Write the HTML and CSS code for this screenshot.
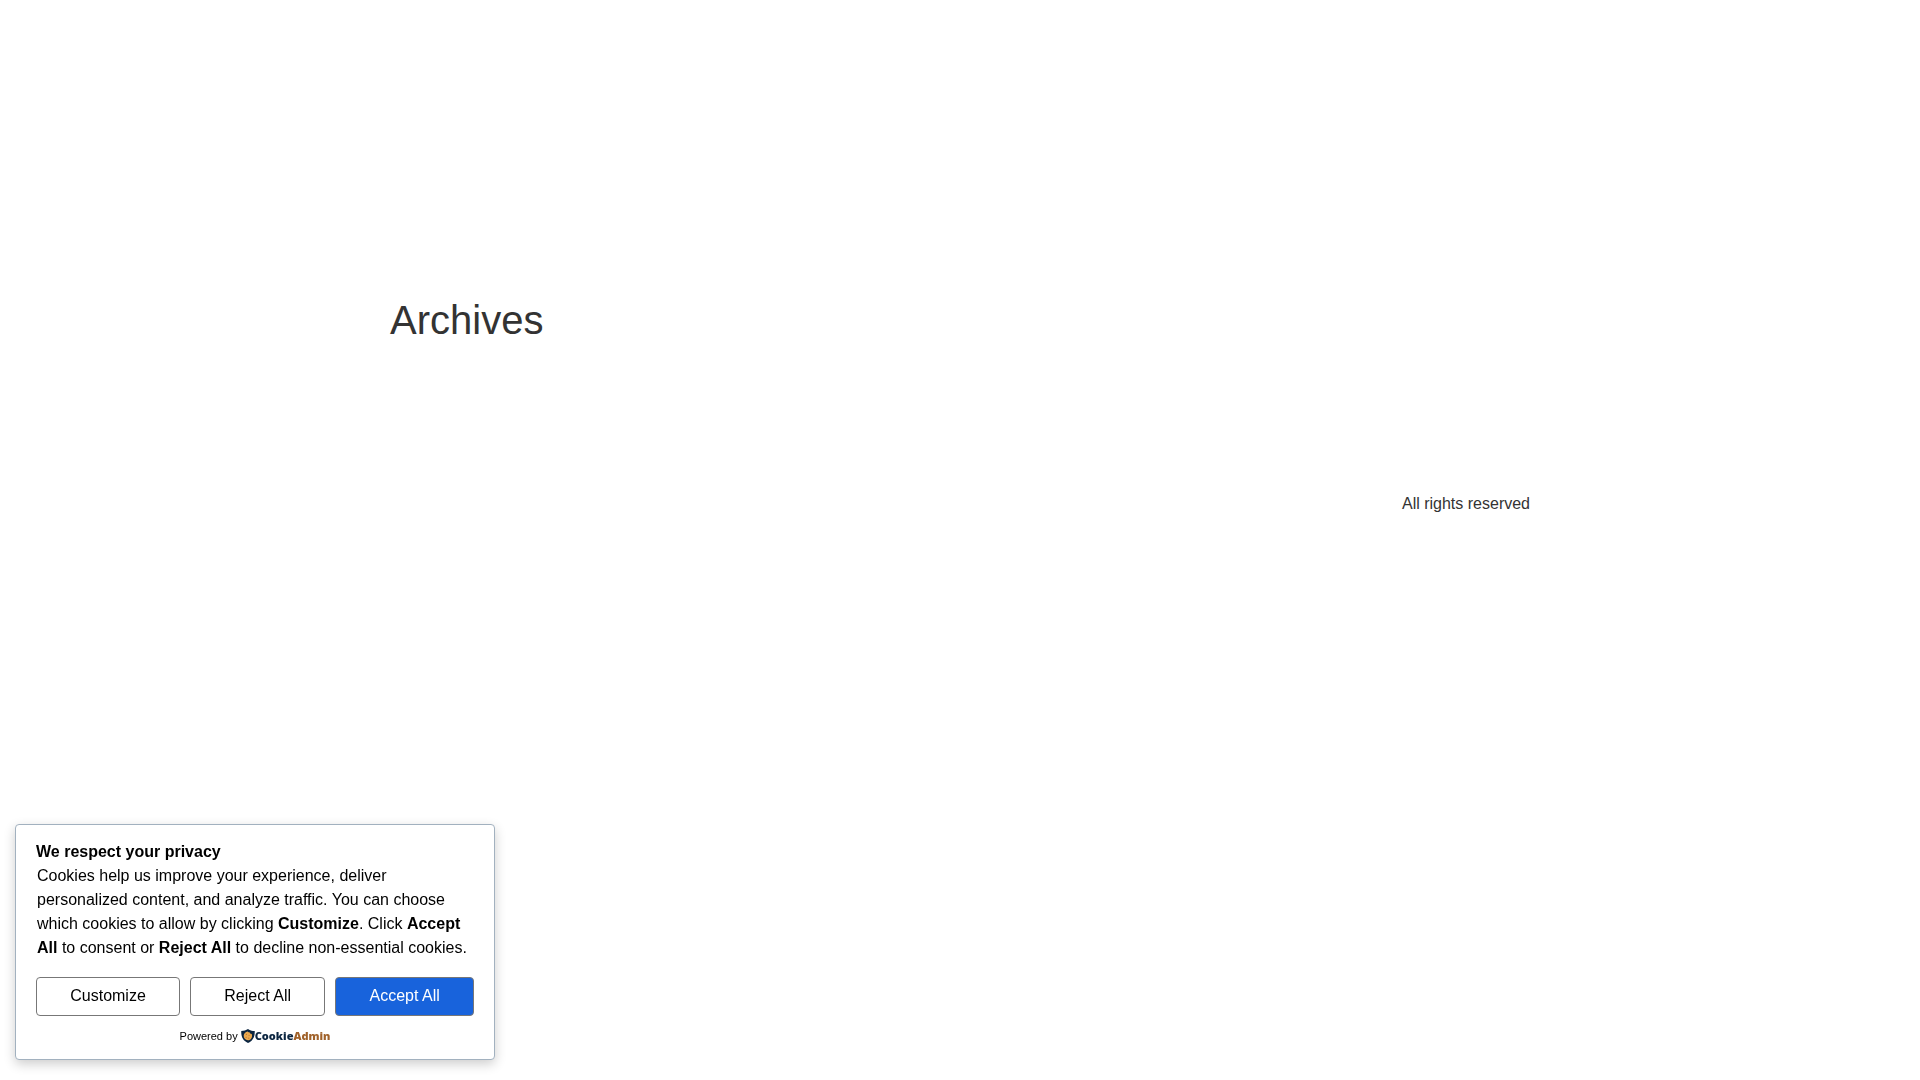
FILE: index.html
```html
<!DOCTYPE html>
<html lang="en">
<head>
    <meta charset="UTF-8">
    <meta name="viewport" content="width=device-width, initial-scale=1">
    <title>Archives</title>
    <link rel="stylesheet" href="styles.css">
</head>
<body>
    <main class="site-main">
        <h1 class="page-title">Archives</h1>
    </main>
    <footer class="site-footer">
        <p class="copyright">All rights reserved</p>
    </footer>

    <section class="cookie-box" aria-labelledby="cookie-title">
        <h2 class="cookie-title" id="cookie-title">We respect your privacy</h2>
        <p class="cookie-text">Cookies help us improve your experience, deliver personalized content, and analyze traffic. You can choose which cookies to allow by clicking <strong>Customize</strong>. Click <strong>Accept All</strong> to consent or <strong>Reject All</strong> to decline non-essential cookies.</p>
        <div class="cookie-buttons">
            <button type="button" class="cookie-btn">Customize</button>
            <button type="button" class="cookie-btn">Reject All</button>
            <button type="button" class="cookie-btn cookie-btn-accept">Accept All</button>
        </div>
        <div class="powered-by">
            <span>Powered by</span>
            <a href="#" class="brand">
                <svg class="brand-icon" viewBox="0 0 26 26" aria-hidden="true">
                    <path fill="#0b2540" d="M13 0c3.500 2.500 7.500 3.600 12.500 3.800C26 14 22.500 22 13 26 3.500 22 0 14 .5 3.800 5.500 3.600 9.500 2.500 13 0z"/>
                    <path fill="#eba94f" d="M12.500 4.500c1 1.500 2 1.500 3.500 1.500.3 2 1.500 3 4 3.200 2 5.800-1.500 11.800-7.200 11.800C8 21 5 17 5 12.700 5 8.300 8.200 5 12.500 4.500z"/>
                    <g fill="#b8752c">
                        <circle cx="10" cy="10" r="1"/>
                        <circle cx="15" cy="12" r="1"/>
                        <circle cx="9.500" cy="15.500" r="1"/>
                        <circle cx="14.500" cy="17" r="1"/>
                    </g>
                </svg>
                <span class="brand-name">Cookie<span class="brand-accent">Admin</span></span>
            </a>
        </div>
    </section>
</body>
</html>
```
FILE: styles.css
```css
* {
    box-sizing: border-box;
}
body {
    margin: 0;
    font-family: "Liberation Sans", Arial, sans-serif;
    font-size: 16px;
    line-height: 24px;
    color: #333;
    background-color: #fff;
}
.site-main,
.site-footer {
    max-width: 1140px;
    margin: 0 auto;
}
.site-main {
    padding: 296px 0 144px;
}
.page-title {
    margin: 0;
    font-size: 40px;
    font-weight: 400;
    line-height: 48px;
}
.site-footer {
    padding: 4px 0;
    text-align: right;
}
.copyright {
    margin: 0;
}
.cookie-box {
    position: fixed;
    left: 15px;
    bottom: 20px;
    width: 100%;
    max-width: 480px;
    padding: 15px 20px;
    color: #000;
    background-color: #fff;
    border: 1px solid #a2b1bf;
    border-radius: 4px;
    box-shadow: 0 4px 12px rgba(0,0,0,0.2);
}
.cookie-title {
    margin: 0;
    font-size: 16px;
    font-weight: 700;
}
.cookie-text {
    margin: 0;
    padding: 0 1px;
}
.cookie-buttons {
    display: flex;
    gap: 10px;
    margin-top: 17px;
}
.cookie-btn {
    flex: 1 1 auto;
    height: 39px;
    padding: 0 20px 2px;
    font-family: inherit;
    font-size: 16px;
    color: #000;
    background-color: #fff;
    border: 1px solid #777;
    border-radius: 4px;
    cursor: pointer;
}
.cookie-btn-accept {
    color: #fff;
    background-color: #1863dc;
}
.powered-by {
    display: flex;
    justify-content: center;
    align-items: center;
    gap: 3px;
    margin-top: 12px;
    font-size: 11px;
    line-height: 16px;
}
.brand {
    display: flex;
    align-items: center;
    text-decoration: none;
}
.brand-icon {
    width: 14px;
    height: 14px;
}
.brand-name {
    font-family: "Open Sans", sans-serif;
    font-size: 11px;
    font-weight: 800;
    color: #0b2540;
}
.brand-accent {
    color: #a0622a;
}
```
